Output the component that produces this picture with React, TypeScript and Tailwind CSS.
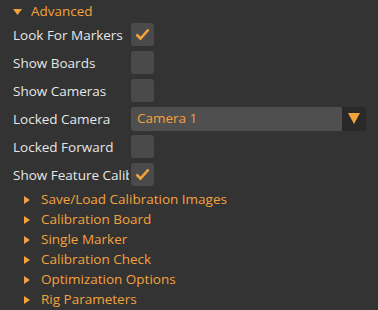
import React from 'react';

const orange = 'text-[#f4a23c]';

const Check = ({ on }: { on?: boolean }) => (
  <div className="w-[23px] h-[23px] rounded-[3px] bg-[#4a4a4a] flex items-center justify-center">
    {on && (
      <svg width="17" height="17" viewBox="0 0 17 17">
        <path d="M2.5 8.5 L6.5 12.5 L14.5 3.5" fill="none" stroke="#f4a23c" strokeWidth="2.6" />
      </svg>
    )}
  </div>
);

const Row = ({ label, children }: { label: string; children: React.ReactNode }) => (
  <div className="flex items-center h-[23px] mb-[5px]">
    <div className="w-[131px] pl-[13px] pr-[2px] shrink-0">
      <div className="overflow-hidden whitespace-nowrap text-[#e6e6e6] leading-[18px]">{label}</div>
    </div>
    {children}
  </div>
);

const Tri = ({ down }: { down?: boolean }) =>
  down ? (
    <svg width="9" height="6" viewBox="0 0 9 6">
      <path d="M0 0 H9 L4.5 6 Z" fill="#f4a23c" />
    </svg>
  ) : (
    <svg width="6" height="8" viewBox="0 0 6 8">
      <path d="M0 0 L6 4 L0 8 Z" fill="#f4a23c" />
    </svg>
  );

export default function App() {
  const sections = [
    'Save/Load Calibration Images',
    'Calibration Board',
    'Single Marker',
    'Calibration Check',
    'Optimization Options',
    'Rig Parameters',
  ];

  return (
    <div className="w-[378px] h-[310px] bg-[#333333] overflow-hidden text-[13.5px] leading-none" style={{ fontFamily: '"Open Sans", sans-serif' }}>
      <div className="flex items-center h-[22px] pt-[1px]">
        <div className="w-[31px] pl-[13px] flex items-center"><Tri down /></div>
        <span className={orange}>Advanced</span>
      </div>
      <div className="pt-[1px]">
        <Row label="Look For Markers"><Check on /></Row>
        <Row label="Show Boards"><Check /></Row>
        <Row label="Show Cameras"><Check /></Row>
        <Row label="Locked Camera">
          <div className="flex h-[24px] w-[235px]">
            <div className={`flex-1 bg-[#4f4f4f] rounded-l-[3px] flex items-center pl-[6px] ${orange}`}>Camera 1</div>
            <div className="w-[24px] bg-[#292929] rounded-r-[3px] flex items-center justify-center">
              <svg width="12" height="11" viewBox="0 0 12 11">
                <path d="M0 0 H12 L6 11 Z" fill="#f4a23c" />
              </svg>
            </div>
          </div>
        </Row>
        <Row label="Locked Forward"><Check /></Row>
        <Row label="Show Feature Calibration"><Check on /></Row>
      </div>
      <div className="-mt-[1px]">
        {sections.map((s) => (
          <div key={s} className="flex items-center h-[20px]">
            <div className="w-[41px] pl-[24px] flex items-center"><Tri /></div>
            <span className={orange}>{s}</span>
          </div>
        ))}
      </div>
    </div>
  );
}
